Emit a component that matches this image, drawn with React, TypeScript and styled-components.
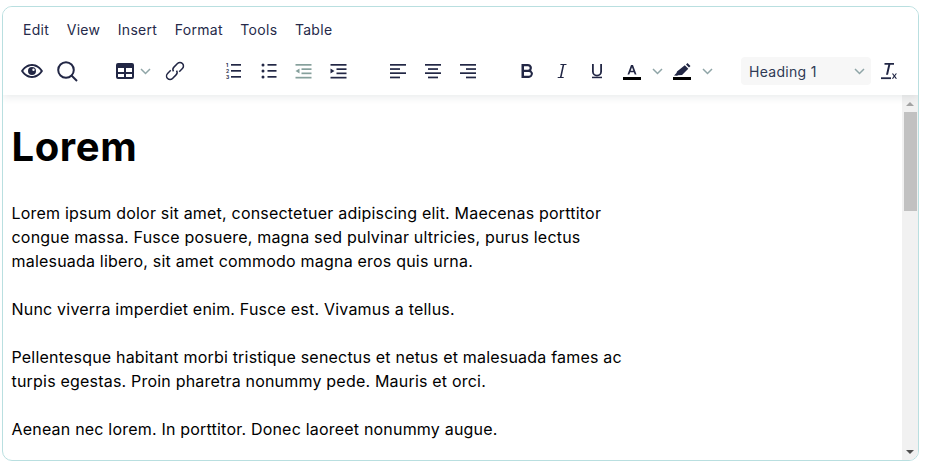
import React from 'react'
import styled, { createGlobalStyle } from 'styled-components'

const Global = createGlobalStyle`
  html, body { margin: 0; padding: 0; background: #fff; }
  body { font-family: Inter, "Liberation Sans", sans-serif; }
`
const Editor = styled.div`
  margin: 6px 0 0 2px;
  width: 917px;
  height: 455px;
  box-sizing: border-box;
  border: 1px solid #b9dfe0;
  border-radius: 10px;
  overflow: hidden;
  display: flex;
  flex-direction: column;
  background: #fff;
`
const Header = styled.div`
  flex: none;
  height: 88px;
  box-sizing: border-box;
  box-shadow: 0 2px 8px rgba(34, 47, 62, 0.1);
  position: relative;
  z-index: 1;
  background: #fff;
`
const MenuBar = styled.div`
  display: flex;
  gap: 17.5px;
  padding: 14px 0 0 20px;
  height: 32px;
  box-sizing: border-box;
`
const MenuItem = styled.span`
  font-size: 14px;
  line-height: 18px;
  letter-spacing: 0.3px;
  color: #262a4a;
`
const Toolbar = styled.div`
  display: flex;
  align-items: center;
  padding: 16px 0 0 11.5px;
`
const Group = styled.div<{ $after?: number }>`
  display: flex;
  align-items: center;
  margin-right: ${p => p.$after ?? 0}px;
`
const Btn = styled.div<{ $off?: boolean }>`
  width: 35px;
  height: 32px;
  display: flex;
  align-items: center;
  justify-content: center;
  color: ${p => (p.$off ? '#86a09c' : '#222745')};
`
const Caret = styled.div<{ $tight?: boolean }>`
  width: 15px;
  height: 32px;
  margin: ${p => (p.$tight ? '0 5px 0 -5px' : '0')};
  display: flex;
  align-items: center;
  justify-content: center;
  color: #8fa5a7;
`
const Select = styled.div`
  width: 130px;
  height: 28px;
  box-sizing: border-box;
  margin-right: -1px;
  padding: 0 6px 0 8px;
  background: #f7f7f7;
  border-radius: 4px;
  display: flex;
  align-items: center;
  justify-content: space-between;
  font-size: 14px;
  letter-spacing: 0.3px;
  color: #2f3a55;
  svg { color: #8fa5a7; }
`
const Main = styled.div`
  flex: 1;
  min-height: 0;
  display: flex;
`
const Body = styled.div`
  flex: 1;
  min-width: 0;
  overflow: hidden;
`
const Content = styled.div`
  width: 640px;
  padding: 0 0 0 8.5px;
  color: #000;
  font-size: 16px;
  line-height: 24px;
  letter-spacing: 0.2px;
`
const Title = styled.h1`
  margin: 25px 0 27px;
  font-size: 40px;
  line-height: 54px;
  font-weight: 700;
  letter-spacing: 0.6px;
`
const Para = styled.p`
  margin: 0 0 24px;
`
const Rail = styled.div`
  flex: none;
  width: 16px;
  padding-top: 1px;
  background: #f1f1f1;
  display: flex;
  flex-direction: column;
`
const RailEnd = styled.div`
  flex: none;
  height: 16px;
  display: flex;
  align-items: center;
  justify-content: center;
`
const Arrow = styled.div<{ $down?: boolean }>`
  width: 0;
  height: 0;
  border-left: 4px solid transparent;
  border-right: 4px solid transparent;
  ${p => (p.$down ? 'border-top: 4px solid #505050;' : 'border-bottom: 4px solid #a3a3a3;')}
`
const RailTrack = styled.div`
  flex: 1;
  padding: 0 1px 0 2px;
`
const Thumb = styled.div`
  height: 99px;
  background: #c1c1c1;
`

const Chevron = () => (
  <svg width="11" height="7" viewBox="0 0 11 7" fill="none" stroke="currentColor" strokeWidth="1.5">
    <path d="M1 1l4.500 4.500L10 1" />
  </svg>
)
const Icon = ({ children }: { children: React.ReactNode }) => (
  <svg width="24" height="24" viewBox="0 0 24 24" fill="currentColor">{children}</svg>
)

const lines = (ys: number[][]) => ys.map(([x, y, w], i) => <rect key={i} x={x} y={y} width={w} height="1.7" />)

const paras = [
  'Lorem ipsum dolor sit amet, consectetuer adipiscing elit. Maecenas porttitor congue massa. Fusce posuere, magna sed pulvinar ultricies, purus lectus malesuada libero, sit amet commodo magna eros quis urna.',
  'Nunc viverra imperdiet enim. Fusce est. Vivamus a tellus.',
  'Pellentesque habitant morbi tristique senectus et netus et malesuada fames ac turpis egestas. Proin pharetra nonummy pede. Mauris et orci.',
  'Aenean nec lorem. In porttitor. Donec laoreet nonummy augue.',
]

export default function App() {
  return (
    <>
      <Global />
      <Editor>
        <Header>
          <MenuBar>
            {['Edit', 'View', 'Insert', 'Format', 'Tools', 'Table'].map(m => <MenuItem key={m}>{m}</MenuItem>)}
          </MenuBar>
          <Toolbar>
            <Group $after={23}>
              <Btn>
                <Icon>
                  <path fillRule="evenodd" d="M12 5c5 0 9 3.400 11 7-2 3.600-6 7-11 7S3 15.600 1 12c2-3.600 6-7 11-7zm0 2c-3.800 0-7 2.400-8.700 5 1.700 2.600 4.900 5 8.700 5s7-2.400 8.700-5C19 9.400 15.800 7 12 7z" />
                  <path fillRule="evenodd" d="M12 8a4 4 0 1 1 0 8 4 4 0 0 1 0-8zm1.500 1.500a1.200 1.200 0 1 0 0 2.400 1.200 1.200 0 0 0 0-2.400z" />
                </Icon>
              </Btn>
              <Btn>
                <Icon>
                  <circle cx="11" cy="11" r="7.800" fill="none" stroke="currentColor" strokeWidth="2" />
                  <path d="M16.500 16.500l5.500 5.500" fill="none" stroke="currentColor" strokeWidth="2" />
                </Icon>
              </Btn>
            </Group>
            <Group $after={23}>
              <Btn>
                <Icon>
                  <path fillRule="evenodd" d="M5 4h14a2 2 0 0 1 2 2v12a2 2 0 0 1-2 2H5a2 2 0 0 1-2-2V6a2 2 0 0 1 2-2zm0 5v4h6V9H5zm8 0v4h6V9h-6zm-8 6v3h6v-3H5zm8 0v3h6v-3h-6z" />
                </Icon>
              </Btn>
              <Caret $tight><Chevron /></Caret>
              <Btn>
                <Icon>
                  <g fill="none" stroke="currentColor" strokeWidth="1.500" transform="rotate(-45 12 12)">
                    <path d="M9.500 8.500H5a3.500 3.500 0 0 0 0 7h5a3.500 3.500 0 0 0 3.400-2.700" />
                    <path d="M14.500 15.500H19a3.500 3.500 0 0 0 0-7h-5a3.500 3.500 0 0 0-3.400 2.700" />
                  </g>
                </Icon>
              </Btn>
            </Group>
            <Group $after={25}>
              <Btn>
                <Icon>
                  {lines([[10, 5, 10], [10, 11, 10], [10, 17, 10]])}
                  <text x="5" y="8" fontSize="5" fontWeight="700">1</text>
                  <text x="5" y="14" fontSize="5" fontWeight="700">2</text>
                  <text x="5" y="20" fontSize="5" fontWeight="700">3</text>
                </Icon>
              </Btn>
              <Btn>
                <Icon>
                  {lines([[11.500, 5, 9], [11.500, 11, 9], [11.500, 17, 9]])}
                  <circle cx="7" cy="6" r="1.500" /><circle cx="7" cy="12" r="1.500" /><circle cx="7" cy="18" r="1.500" />
                </Icon>
              </Btn>
              <Btn $off>
                <Icon>
                  {lines([[4.500, 5, 16], [10.500, 9.300, 10], [10.500, 13.500, 10], [4.500, 17.800, 16]])}
                  <path d="M8.500 9.500v5l-4-2.500z" />
                </Icon>
              </Btn>
              <Btn>
                <Icon>
                  {lines([[4.500, 5, 16], [10.500, 9.300, 10], [10.500, 13.500, 10], [4.500, 17.800, 16]])}
                  <path d="M4.500 9.500v5l4-2.500z" />
                </Icon>
              </Btn>
            </Group>
            <Group $after={24}>
              <Btn><Icon>{lines([[4, 5, 16], [4, 9.200, 10], [4, 13.300, 16], [4, 17.600, 10]])}</Icon></Btn>
              <Btn><Icon>{lines([[4, 5, 16], [7, 9.200, 10], [4, 13.300, 16], [7, 17.600, 10]])}</Icon></Btn>
              <Btn><Icon>{lines([[4, 5, 16], [10, 9.200, 10], [4, 13.300, 16], [10, 17.600, 10]])}</Icon></Btn>
            </Group>
            <Group $after={26.5}>
              <Btn>
                <Icon>
                  <path fillRule="evenodd" d="M6.500 5h6.500a4 4 0 0 1 3.200 6.400A4.300 4.300 0 0 1 14 19H6.500V5zm2.500 2.300v3.400h4a1.700 1.700 0 0 0 0-3.400H9zm0 5.700v3.700h5a1.850 1.850 0 0 0 0-3.700H9z" />
                </Icon>
              </Btn>
              <Btn>
                <Icon><path d="M10.500 5h6v1h-2.300L11.600 18h2.100v1H7.700v-1H10L12.600 6h-2.300z" /></Icon>
              </Btn>
              <Btn>
                <Icon>
                  <path d="M7 5h1.800v7.500a3.200 3.200 0 0 0 6.400 0V5H17v7.500a5 5 0 0 1-10 0z" />
                  <rect x="7" y="17.700" width="10" height="1.500" />
                </Icon>
              </Btn>
              <Btn>
                <Icon>
                  <path fillRule="evenodd" d="M11 6h2l3.500 9.500h-1.800l-.8-2.300h-3.800l-.8 2.300H7.500zm1 2.200L10.700 11.800h2.600z" />
                  <rect x="3" y="18" width="18" height="3" fill="#000" />
                </Icon>
              </Btn>
              <Caret><Chevron /></Caret>
              <Btn>
                <Icon>
                  <path d="M17.500 4l3 3-1.500 1.500-3-3zM14.800 6.200l3.500 3.500-6.300 6.300-4 .3-.8.500-3.200-.3 2.500-2.500.500-1.500z" />
                  <rect x="3" y="18" width="18" height="3" fill="#000" />
                </Icon>
              </Btn>
              <Caret><Chevron /></Caret>
            </Group>
            <Group>
              <Select>Heading 1<Chevron /></Select>
              <Btn>
                <Icon>
                  <path d="M8.500 4h9.500v1.800h-3.700L12 15.800h-2l2.300-10H8.500z" />
                  <rect x="5" y="18.300" width="10" height="1.800" />
                  <path d="M15.800 14.500h1.400l1.200 1.700 1.200-1.700h1.400l-1.900 2.500 1.900 2.800h-1.400l-1.200-1.800-1.200 1.800h-1.400l1.900-2.800z" />
                </Icon>
              </Btn>
            </Group>
          </Toolbar>
        </Header>
        <Main>
          <Body>
            <Content>
              <Title>Lorem</Title>
              {paras.map((p, i) => <Para key={i}>{p}</Para>)}
            </Content>
          </Body>
          <Rail>
            <RailEnd><Arrow /></RailEnd>
            <RailTrack><Thumb /></RailTrack>
            <RailEnd><Arrow $down /></RailEnd>
          </Rail>
        </Main>
      </Editor>
    </>
  )
}
